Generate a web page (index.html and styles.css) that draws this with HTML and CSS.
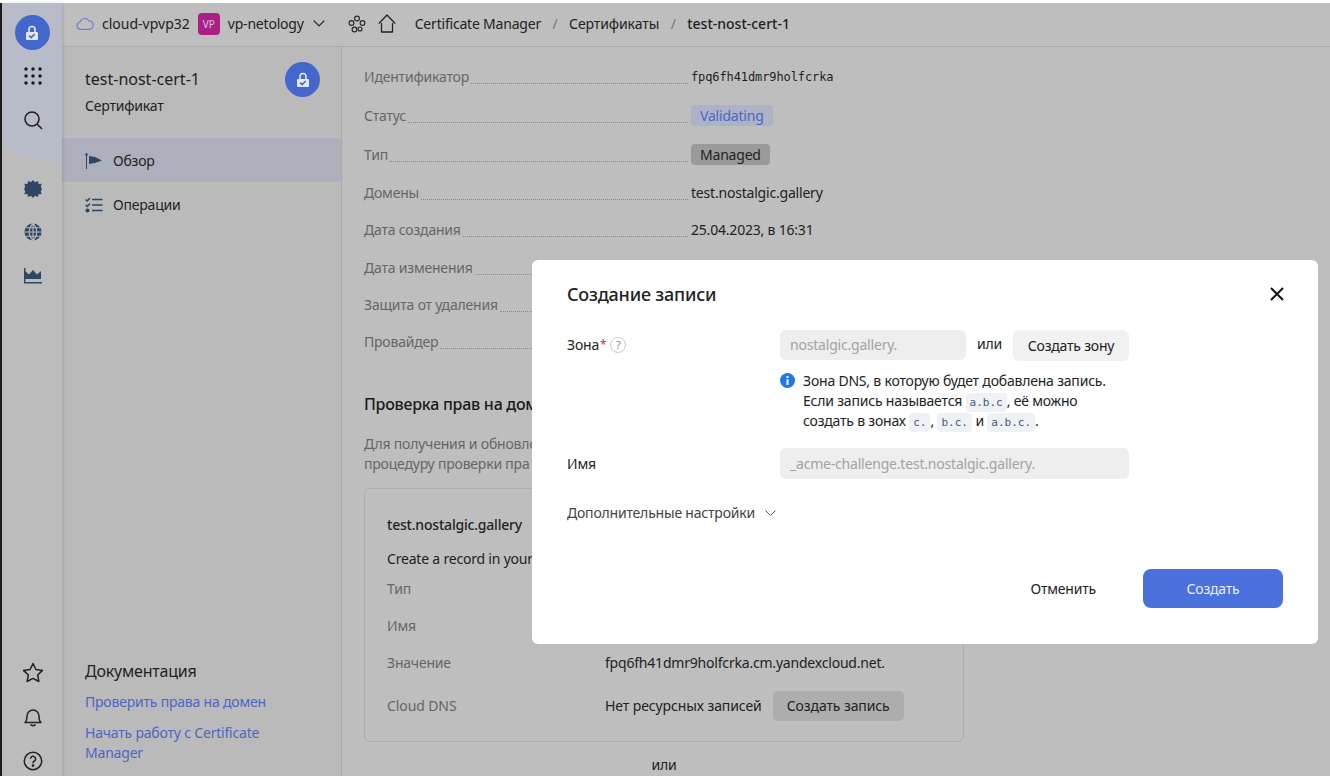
FILE: index.html
```html
<!DOCTYPE html>
<html lang="ru">

<head>
    <meta charset="utf-8">
    <title>Создание записи</title>
    <link rel="stylesheet" href="styles.css">
</head>

<body>
    <svg class="defs" width="0" height="0">
        <symbol id="lock" viewBox="0 0 16 16">
            <path fill="#fff" opacity=".85" d="M3 7h10a1 1 0 0 1 1 1v6a1 1 0 0 1-1 1H3a1 1 0 0 1-1-1V8a1 1 0 0 1 1-1z" />
            <path fill="none" stroke="#fff" stroke-width="1.6" opacity=".85" d="M5 7V4.5a3 3 0 0 1 6 0V7" />
            <path fill="none" stroke="#4367cb" stroke-width="1.6" d="M5.2 10.6l2 2 3.6-3.6" />
        </symbol>
    </svg>

    <div class="app">
        <nav class="rail">
            <svg class="rail-bg" width="60" height="170" viewBox="0 0 60 170">
                <path fill="#b8bbc8" d="M0 0h60v165c-12-8-24-11-38-13C10 150 2 146 0 138z" />
            </svg>
            <div class="rail-top">
                <span class="round-logo"><svg width="16" height="16"><use href="#lock" /></svg></span>
                <svg class="rail-icon" width="18" height="18" viewBox="0 0 18 18" fill="#1a1a1a">
                    <circle cx="2" cy="2" r="1.7" /><circle cx="9" cy="2" r="1.7" /><circle cx="16" cy="2" r="1.7" />
                    <circle cx="2" cy="9" r="1.7" /><circle cx="9" cy="9" r="1.7" /><circle cx="16" cy="9" r="1.7" />
                    <circle cx="2" cy="16" r="1.7" /><circle cx="9" cy="16" r="1.7" /><circle cx="16" cy="16" r="1.7" />
                </svg>
                <svg class="rail-icon" width="20" height="20" viewBox="0 0 20 20" fill="none" stroke="#222" stroke-width="1.6">
                    <circle cx="9" cy="9" r="7" /><path d="M14 14l5 5" />
                </svg>
            </div>
            <div class="rail-services">
                <svg width="18" height="18" viewBox="0 0 18 18" fill="#2d4664">
                    <circle cx="9" cy="9" r="7.2" />
                    <path d="M9 0l2 2.2L14 1l.6 3 3-.2-.8 3L18 9l-1.2 2.2.8 3-3-.2L14 17l-3-1.2L9 18l-2-2.2L4 17l-.6-3-3 .2.8-3L0 9l1.2-2.2-.8-3 3 .2L4 1l3 1.2z" />
                </svg>
                <svg width="18" height="18" viewBox="0 0 18 18" fill="#2d4664">
                    <path d="M9 .5a8.5 8.5 0 1 0 0 17 8.5 8.5 0 0 0 0-17z" />
                    <path fill="none" stroke="#bcbcbc" stroke-width="1.1" d="M9 .5v17M.5 9h17M2 4.8h14M2 13.2h14M9 .5c-5 5-5 12 0 17M9 .5c5 5 5 12 0 17" />
                </svg>
                <svg class="crown-icon" width="18" height="16" viewBox="0 0 18 16" fill="#2d4664">
                    <path d="M1 3l4 3.5L9 2l4 4.5L17 3v8H1z" />
                    <path d="M0 0h1.4v14H18v1.6H0z" />
                </svg>
            </div>
            <div class="rail-bottom">
                <svg width="22" height="21" viewBox="0 0 22 21" fill="none" stroke="#222" stroke-width="1.5" stroke-linejoin="round">
                    <path d="M11 1.5l2.900 6 6.600.9-4.800 4.600 1.200 6.500L11 16.400l-5.900 3.100 1.200-6.500L1.500 8.400l6.600-.9z" />
                </svg>
                <svg width="18" height="20" viewBox="0 0 18 20" fill="none" stroke="#222" stroke-width="1.5">
                    <path d="M1 15.500c2-1.500 2-3 2-6.500a6 6 0 0 1 12 0c0 3.500 0 5 2 6.500z" stroke-linejoin="round" />
                    <path d="M6.500 17.500c1 1.500 4 1.500 5 0" />
                </svg>
                <svg width="20" height="20" viewBox="0 0 20 20" fill="none" stroke="#222" stroke-width="1.5">
                    <circle cx="10" cy="10" r="8.700" />
                    <path d="M7.400 7.800A2.600 2.600 0 1 1 11.500 10c-1 .6-1.500 1-1.500 2.200" />
                    <circle cx="10" cy="14.600" r=".6" fill="#222" />
                </svg>
            </div>
        </nav>

        <div class="workspace">
            <header class="topbar">
                <svg class="cloud-icon" width="18" height="13" viewBox="0 0 18 13" fill="none" stroke="#6a85cf" stroke-width="1.200">
                    <path d="M4.500 12.300a3.700 3.700 0 0 1-.5-7.300A5 5 0 0 1 13 3.800a4.300 4.300 0 0 1 .8 8.500z" />
                </svg>
                <span class="cloud-name">cloud-vpvp32</span>
                <span class="folder-badge">VP</span>
                <span class="folder-name">vp-netology</span>
                <svg class="chevron" width="12" height="7" viewBox="0 0 12 7" fill="none" stroke="#222" stroke-width="1.200">
                    <path d="M.7.700L6 6l5.300-5.300" />
                </svg>
                <svg class="flower-icon" width="18" height="18" viewBox="0 0 18 18" fill="none" stroke="#222" stroke-width="1.100">
                    <circle cx="9" cy="3.500" r="2.400" /><circle cx="3.500" cy="8" r="2.400" /><circle cx="14.500" cy="8" r="2.400" /><circle cx="6.500" cy="14.500" r="2.400" /><circle cx="12" cy="14" r="2" />
                </svg>
                <svg class="home-icon" width="18" height="19" viewBox="0 0 18 19" fill="none" stroke="#222" stroke-width="1.300">
                    <path d="M.8 9.500L9 1l8.200 8.500M3.500 9v9h11V9" stroke-linejoin="round" />
                </svg>
                <ol class="crumbs">
                    <li>Certificate Manager</li>
                    <li class="slash">/</li>
                    <li class="crumb-mid">Сертификаты</li>
                    <li class="slash">/</li>
                    <li class="crumb-current">test-nost-cert-1</li>
                </ol>
            </header>

            <div class="columns">
                <aside class="sidebar">
                    <div class="cert-head">
                        <div>
                            <div class="cert-name">test-nost-cert-1</div>
                            <div class="cert-kind">Сертификат</div>
                        </div>
                        <span class="round-logo"><svg width="16" height="16"><use href="#lock" /></svg></span>
                    </div>
                    <a class="side-item side-item-active">
                        <svg width="18" height="16" viewBox="0 0 18 16" fill="#2d4664">
                            <path d="M1 1.500h1V16H1z" /><circle cx="1.500" cy="1.500" r="1.300" />
                            <path d="M4 3l6 1 7 3.500-7 2.500-6 1z" />
                        </svg>
                        Обзор
                    </a>
                    <a class="side-item">
                        <svg width="18" height="16" viewBox="0 0 18 16" fill="none" stroke="#2d4664" stroke-width="1.500">
                            <path d="M7 2.500h10.500M7 8h10.500M7 13.500h10.500M.7 2.500l1.500 1.500L5 1M.7 8l1.500 1.500L5 6.500" />
                            <circle cx="2.500" cy="13.500" r="1.300" fill="#2d4664" />
                        </svg>
                        Операции
                    </a>
                    <div class="docs">
                        <h3 class="docs-title">Документация</h3>
                        <a class="docs-link">Проверить права на домен</a>
                        <a class="docs-link">Начать работу с Certificate Manager</a>
                    </div>
                </aside>

                <main class="content">
                    <dl class="props">
                        <div class="prop prop-tall"><dt><span>Идентификатор</span></dt><dd class="mono">fpq6fh41dmr9holfcrka</dd></div>
                        <div class="prop prop-tall"><dt><span>Статус</span></dt><dd><span class="tag tag-blue">Validating</span></dd></div>
                        <div class="prop prop-mid"><dt><span>Тип</span></dt><dd><span class="tag tag-gray">Managed</span></dd></div>
                        <div class="prop"><dt><span>Домены</span></dt><dd>test.nostalgic.gallery</dd></div>
                        <div class="prop"><dt><span>Дата создания</span></dt><dd>25.04.2023, в 16:31</dd></div>
                        <div class="prop"><dt><span>Дата изменения</span></dt></div>
                        <div class="prop"><dt><span>Защита от удаления</span></dt></div>
                        <div class="prop"><dt><span>Провайдер</span></dt></div>
                    </dl>

                    <h2 class="check-title">Проверка прав на дом</h2>
                    <p class="check-text">Для получения и обновле<br>процедуру проверки пра</p>

                    <section class="card">
                        <div class="card-domain">test.nostalgic.gallery</div>
                        <div class="card-note">Create a record in your</div>
                        <div class="card-row"><span class="card-label">Тип</span></div>
                        <div class="card-row"><span class="card-label">Имя</span></div>
                        <div class="card-row"><span class="card-label">Значение</span><span>fpq6fh41dmr9holfcrka.cm.yandexcloud.net.</span></div>
                        <div class="card-row card-row-last"><span class="card-label">Cloud DNS</span><span>Нет ресурсных записей</span><button class="btn-dim">Создать запись</button></div>
                    </section>
                    <div class="or-line">или</div>
                </main>
            </div>
        </div>
    </div>

    <div class="modal">
        <div class="modal-head">
            <h2 class="modal-title">Создание записи</h2>
            <svg class="modal-close" width="14" height="14" viewBox="0 0 14 14" fill="none" stroke="#111" stroke-width="2">
                <path d="M1 1l12 12M13 1L1 13" />
            </svg>
        </div>

        <div class="field">
            <div class="field-label">Зона<span class="req">*</span><span class="hint-mark">?</span></div>
            <div class="field-body">
                <div class="zone-line">
                    <div class="input input-zone">nostalgic.gallery.</div>
                    <span class="zone-or">или</span>
                    <button class="btn-soft">Создать зону</button>
                </div>
                <div class="note">
                    <svg class="note-icon" width="15" height="15" viewBox="0 0 15 15">
                        <circle cx="7.500" cy="7.500" r="7.500" fill="#1f78e6" />
                        <path fill="#fff" d="M6.500 6.200h2V12h-2zM6.500 3h2v2h-2z" />
                    </svg>
                    <div class="note-text">Зона DNS, в которую будет добавлена запись.<br>Если запись называется <code>a.b.c</code>, её можно<br>создать в зонах <code>c.</code>, <code>b.c.</code> и <code>a.b.c.</code>.</div>
                </div>
            </div>
        </div>

        <div class="field field-name">
            <div class="field-label">Имя</div>
            <div class="field-body">
                <div class="input input-name">_acme-challenge.test.nostalgic.gallery.</div>
            </div>
        </div>

        <div class="more">
            Дополнительные настройки
            <svg width="11" height="6" viewBox="0 0 11 6" fill="none" stroke="#555" stroke-width="1">
                <path d="M.5.500l5 5 5-5" />
            </svg>
        </div>

        <div class="modal-actions">
            <button class="btn-cancel">Отменить</button>
            <button class="btn-primary">Создать</button>
        </div>
    </div>
</body>

</html>
```

FILE: styles.css
```css
* {
    box-sizing: border-box;
}

html,
body {
    margin: 0;
    height: 776px;
    overflow: hidden;
}

body {
    background-color: #fff;
    padding-top: 3px;
    font-family: "Noto Sans", "Open Sans", sans-serif;
    font-size: 14px;
    line-height: 20px;
    letter-spacing: -0.2px;
    color: #222;
    position: relative;
}

button {
    letter-spacing: inherit;
}

.defs {
    position: absolute;
}

.app {
    display: flex;
    height: 773px;
    background-color: #bebebe;
    border-left: 2px solid #1d1a1c;
}

/* left rail */
.rail {
    position: relative;
    width: 60px;
    flex-shrink: 0;
    background-color: #bcbcbc;
    box-shadow: 1px 0 3px rgba(0, 0, 0, 0.12);
    display: flex;
    flex-direction: column;
    align-items: center;
    z-index: 1;
}

.rail-bg {
    position: absolute;
    top: 0;
    left: 0;
}

.rail-top,
.rail-services,
.rail-bottom {
    position: relative;
    display: flex;
    flex-direction: column;
    align-items: center;
}

.rail-top {
    padding-top: 12px;
}

.rail-top .rail-icon:nth-child(2) {
    margin-top: 17px;
    margin-left: 2px;
}

.rail-top .rail-icon:nth-child(3) {
    margin-top: 25px;
    margin-left: 2px;
}

.rail-services {
    margin-top: 50px;
    margin-left: 2px;
    gap: 25px;
}

.crown-icon {
    margin-top: 2px;
}

.rail-bottom {
    margin-top: auto;
    margin-left: 1px;
    padding-bottom: 5px;
    gap: 24px;
}

.round-logo {
    width: 35px;
    height: 35px;
    border-radius: 50%;
    background-color: #4367cb;
    display: flex;
    align-items: center;
    justify-content: center;
    flex-shrink: 0;
}

/* header */
.workspace {
    flex: 1;
    min-width: 0;
    display: flex;
    flex-direction: column;
}

.topbar {
    height: 44px;
    flex-shrink: 0;
    display: flex;
    align-items: center;
    padding-left: 14px;
    border-bottom: 1px solid #adadad;
    padding-bottom: 2px;
}

.cloud-name {
    margin-left: 8px;
    letter-spacing: 0;
}

.folder-badge {
    width: 22px;
    height: 22px;
    margin-left: 8px;
    border-radius: 4px;
    background-color: #ab1f85;
    color: #d9c4d4;
    font-size: 10px;
    letter-spacing: 0;
    text-align: center;
    line-height: 22px;
}

.folder-name {
    margin-left: 8px;
}

.chevron {
    margin-left: 9px;
}

.flower-icon {
    margin-left: 23px;
}

.home-icon {
    margin-left: 12px;
}

.crumbs {
    display: flex;
    list-style: none;
    margin: 0 0 0 19px;
    padding: 0;
}

.slash {
    color: #777;
    margin: 0 11.500px;
}

.crumb-mid {
    letter-spacing: -0.1px;
}

.crumb-current {
    font-weight: 500;
    letter-spacing: 0;
}

.columns {
    flex: 1;
    min-height: 0;
    display: flex;
}

/* sidebar */
.sidebar {
    width: 280px;
    flex-shrink: 0;
    background-color: #bababa;
    border-right: 1px solid #a9a9a9;
    display: flex;
    flex-direction: column;
}

.cert-head {
    height: 91px;
    padding: 15px 21px 0 23px;
    display: flex;
    justify-content: space-between;
    align-items: flex-start;
}

.cert-name {
    font-size: 16px;
    line-height: 22px;
    letter-spacing: 0;
    margin-top: 6px;
}

.cert-kind {
    margin-top: 6px;
}

.side-item {
    height: 44px;
    display: flex;
    align-items: center;
    gap: 10px;
    padding: 2px 0 0 23px;
}

.side-item-active {
    background-color: #adafbc;
}

.docs {
    margin-top: auto;
    padding: 0 60px 2px 23px;
}

.docs-title {
    margin: 0 0 10px;
    font-size: 16px;
    line-height: 22px;
    font-weight: 400;
}

.docs-link {
    display: block;
    color: #4a67c4;
    margin-bottom: 11px;
}

/* content */
.content {
    flex: 1;
    min-width: 0;
    padding-left: 22px;
    overflow: hidden;
}

.props {
    margin: 0;
    width: 600px;
    padding-top: 20px;
}

.prop {
    display: flex;
    height: 37.300px;
    align-items: flex-start;
}

.prop-tall {
    height: 39px;
}

.prop-mid {
    height: 38px;
}

.prop dt {
    width: 327px;
    flex-shrink: 0;
    display: flex;
    padding-right: 3px;
    color: #666;
}

.prop dt::after {
    content: "";
    flex: 1;
    height: 16px;
    margin-left: 2px;
    border-bottom: 1px dotted #8a8a8a;
}

.prop dd {
    margin: 0;
}

.mono {
    font-family: "DejaVu Sans Mono", "Liberation Mono", monospace;
    font-size: 12px;
    letter-spacing: -0.1px;
}

.tag {
    display: inline-block;
    height: 21px;
    line-height: 21px;
    margin-top: -1px;
    padding: 0 9px;
    border-radius: 4px;
}

.tag-blue {
    background-color: #adb3c7;
    color: #4a67c4;
}

.tag-gray {
    background-color: #9a9a9a;
}

.check-title {
    margin: 24px 0 0;
    font-size: 16px;
    line-height: 22px;
    font-weight: 500;
    letter-spacing: -0.25px;
    color: #1a1a1a;
    white-space: nowrap;
}

.check-text {
    margin: 19px 0 0;
    color: #666;
    white-space: nowrap;
}

.card {
    width: 600px;
    height: 254px;
    margin-top: 14px;
    padding: 26px 22px 0;
    border: 1px solid #adadad;
    border-radius: 6px;
}

.card-domain {
    font-weight: 500;
}

.card-note {
    margin: 14px 0 1px;
}

.card-row {
    display: flex;
    align-items: center;
    height: 37px;
}

.card-row-last {
    height: 50px;
    letter-spacing: -0.1px;
}

.card-label {
    width: 218px;
    flex-shrink: 0;
    color: #666;
}

.btn-dim {
    height: 30px;
    margin-left: 11px;
    padding: 0 14px;
    border: none;
    border-radius: 5px;
    background-color: #adadad;
    font: inherit;
    color: #222;
}

.or-line {
    width: 600px;
    margin-top: 13px;
    text-align: center;
}

/* dialog */
.modal {
    position: absolute;
    left: 532px;
    top: 260px;
    width: 786px;
    height: 384px;
    padding: 0 35px;
    background-color: #fff;
    border-radius: 6px;
    display: flex;
    flex-direction: column;
    z-index: 2;
}

.modal-head {
    height: 66px;
    margin-bottom: 4px;
    flex-shrink: 0;
    display: flex;
    justify-content: space-between;
    align-items: center;
    padding-top: 1px;
}

.modal-title {
    margin: 0;
    font-size: 18px;
    font-weight: 500;
}

.modal-close {
    margin-right: -1px;
}

.field {
    display: flex;
}

.field-label {
    width: 213px;
    flex-shrink: 0;
    padding-top: 5px;
    display: flex;
    align-items: flex-start;
}

.field-name .field-label {
    padding-top: 6px;
}

.req {
    color: #e0382e;
    font-size: 12px;
    margin-left: 1px;
}

.hint-mark {
    width: 16px;
    height: 16px;
    margin: 2px 0 0 4px;
    border: 1px solid #ccc;
    border-radius: 50%;
    color: #888;
    font-size: 11px;
    line-height: 14px;
    text-align: center;
}

.field-body {
    width: 349px;
}

.zone-line {
    display: flex;
    align-items: flex-start;
}

.input {
    height: 30px;
    padding: 0 10px;
    border-radius: 6px;
    background-color: #eee;
    color: #a3a3a3;
    line-height: 30px;
}

.input-zone {
    width: 186px;
}

.input-name {
    height: 31px;
    line-height: 31px;
}

.zone-or {
    width: 47px;
    padding-top: 4px;
    text-align: center;
}

.btn-soft {
    width: 116px;
    height: 31px;
    border: none;
    border-radius: 6px;
    background-color: #f1f1f1;
    font: inherit;
    color: #222;
}

.note {
    display: flex;
    gap: 8px;
    margin-top: 10px;
}

.note-icon {
    flex-shrink: 0;
    margin-top: 2px;
}

.note-text {
    white-space: nowrap;
}

code {
    font-family: "DejaVu Sans Mono", "Liberation Mono", monospace;
    font-size: 11px;
    line-height: 1;
    letter-spacing: 0;
    padding: 3px 4px;
    border-radius: 4px;
    background-color: #eff2f5;
    color: #3f5a78;
}

.field-name {
    margin-top: 17px;
}

.more {
    margin-top: 24px;
    display: flex;
    align-items: center;
    gap: 10px;
    color: #444;
}

.modal-actions {
    margin-top: auto;
    margin-bottom: 36px;
    display: flex;
    justify-content: flex-end;
    align-items: center;
    gap: 47px;
}

.btn-cancel {
    padding: 0;
    border: none;
    background: none;
    font: inherit;
    color: #222;
}

.btn-primary {
    width: 140px;
    height: 39px;
    border: none;
    border-radius: 8px;
    background-color: #4b71dc;
    font: inherit;
    color: #e8edfa;
}
```
